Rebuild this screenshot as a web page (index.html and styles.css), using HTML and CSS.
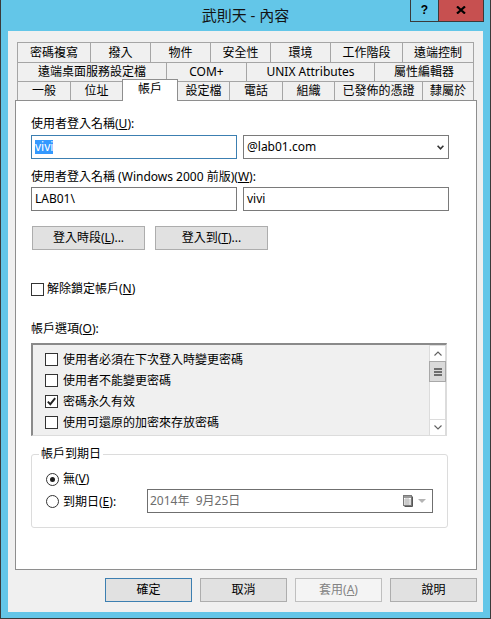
FILE: index.html
```html
<!DOCTYPE html>
<html lang="zh-Hant">
<head>
<meta charset="utf-8">
<title>武則天 - 內容</title>
<link rel="stylesheet" href="styles.css">
</head>
<body>
<div class="window">
  <div class="titlebar">
    <div class="tb-spacer"></div>
    <div class="title">武則天 - 內容</div>
    <div class="caption-btns">
      <div class="cap help">?</div>
      <div class="cap close">
        <svg width="10" height="8" viewBox="0 0 10 8"><path d="M1 0.5 L9 7.5 M9 0.5 L1 7.5" stroke="#000" stroke-width="2.2" fill="none"/></svg>
      </div>
    </div>
  </div>

  <div class="client">
    <div class="tabs">
      <div class="tabrow r1">
        <div class="tab w74">密碼複寫</div>
        <div class="tab w61">撥入</div>
        <div class="tab w61">物件</div>
        <div class="tab w61">安全性</div>
        <div class="tab w61">環境</div>
        <div class="tab w73">工作階段</div>
        <div class="tab w72">遠端控制</div>
      </div>
      <div class="tabrow r2">
        <div class="tab w150">遠端桌面服務設定檔</div>
        <div class="tab w81">COM+</div>
        <div class="tab w129">UNIX Attributes</div>
        <div class="tab w100">屬性編輯器</div>
      </div>
      <div class="tabrow r3">
        <div class="tab w54">一般</div>
        <div class="tab w53">位址</div>
        <div class="tab w56 active">帳戶</div>
        <div class="tab w53">設定檔</div>
        <div class="tab w54">電話</div>
        <div class="tab w53">組織</div>
        <div class="tab w89">已發佈的憑證</div>
        <div class="tab w52">隸屬於</div>
      </div>
    </div>

    <div class="panel">
      <div class="lbl lbl-first">使用者登入名稱(<u>U</u>):</div>
      <div class="field-row fr-first">
        <div class="input focused"><span class="sel">vivi</span></div>
        <div class="input combo">
          <span>@lab01.com</span>
          <svg class="chev" width="7" height="5" viewBox="0 0 7 5"><path d="M0.6 0.8 L3.5 3.8 L6.4 0.8" stroke="#333" stroke-width="1.6" fill="none"/></svg>
        </div>
      </div>
      <div class="lbl lbl-second">使用者登入名稱 (Windows 2000 前版)(<u>W</u>):</div>
      <div class="field-row fr-second">
        <div class="input">LAB01\</div>
        <div class="input">vivi</div>
      </div>
      <div class="btn-row">
        <div class="btn wide">登入時段(<u>L</u>)...</div>
        <div class="btn wide">登入到(<u>T</u>)...</div>
      </div>

      <div class="check-line unlock">
        <span class="cb"></span>
        <span class="cb-text">解除鎖定帳戶(<u>N</u>)</span>
      </div>

      <div class="lbl lbl-options">帳戶選項(<u>O</u>):</div>
      <div class="listbox">
        <div class="list-items">
          <div class="list-item"><span class="cb"></span><span>使用者必須在下次登入時變更密碼</span></div>
          <div class="list-item"><span class="cb"></span><span>使用者不能變更密碼</span></div>
          <div class="list-item"><span class="cb checked"><svg width="11" height="11" viewBox="0 0 11 11"><path d="M1.8 5.6 L4.3 8.2 L9.2 2.2" stroke="#222" stroke-width="1.9" fill="none"/></svg></span><span>密碼永久有效</span></div>
          <div class="list-item"><span class="cb"></span><span>使用可還原的加密來存放密碼</span></div>
        </div>
        <div class="scrollbar">
          <div class="sb-btn sb-up"><svg width="8" height="5" viewBox="0 0 8 5"><path d="M0.5 4.5 L4 1 L7.5 4.5" stroke="#606060" stroke-width="1.1" fill="none"/></svg></div>
          <div class="sb-thumb"><svg width="8" height="8" viewBox="0 0 8 8"><rect x="0" y="0" width="8" height="2" fill="#6e6e6e"/><rect x="0" y="3" width="8" height="2" fill="#6e6e6e"/><rect x="0" y="6" width="8" height="2" fill="#6e6e6e"/></svg></div>
          <div class="sb-track"></div>
          <div class="sb-btn sb-down"><svg width="8" height="5" viewBox="0 0 8 5"><path d="M0.5 0.5 L4 4 L7.5 0.5" stroke="#606060" stroke-width="1.1" fill="none"/></svg></div>
        </div>
      </div>

      <fieldset class="expiry">
        <legend>帳戶到期日</legend>
        <div class="fs-body">
          <div class="radio-line r-first">
            <span class="rb checked"><span class="dot"></span></span>
            <span>無(<u>V</u>)</span>
          </div>
          <div class="radio-line r-second">
            <div class="radio-label">
              <span class="rb"></span>
              <span>到期日(<u>E</u>):</span>
            </div>
            <div class="datepicker">
              <span class="date-text">2014年&nbsp;&nbsp;9月25日</span>
              <svg class="cal" width="10" height="12" viewBox="0 0 10 12">
                <rect x="0.5" y="0.5" width="8" height="10" fill="#fff" stroke="#7a7a7a"/>
                <path d="M9.5 1.5 V11.5 H1.5" stroke="#555" fill="none"/>
                <rect x="1" y="1" width="7" height="2" fill="#9a9a9a"/>
                <path d="M1 5 H8 M1 7 H8 M1 9 H8 M3 3 V10 M5 3 V10" stroke="#b8b8b8" stroke-width="1" fill="none"/>
              </svg>
              <svg class="dd" width="8" height="4" viewBox="0 0 8 4"><path d="M0 0 H8 L4 4 Z" fill="#b4b4b4"/></svg>
            </div>
          </div>
        </div>
      </fieldset>
    </div>

    <div class="dlg-buttons">
      <div class="btn dlg default">確定</div>
      <div class="btn dlg">取消</div>
      <div class="btn dlg disabled">套用(<u>A</u>)</div>
      <div class="btn dlg">說明</div>
    </div>
  </div>
</div>
</body>
</html>
```

FILE: styles.css
```css
* {
  box-sizing: border-box;
}

html,
body {
  margin: 0;
  padding: 0;
}

body {
  width: 491px;
  height: 619px;
  font-family: "Noto Sans", "Noto Sans CJK TC", sans-serif;
  font-size: 12px;
  line-height: 16px;
  color: #000;
  background: #fff;
}

.window {
  width: 491px;
  height: 619px;
  background: #63c6e8;
  border: 1px solid #3a3a3a;
  border-top: none;
  display: flex;
  flex-direction: column;
}

/* Title bar */
.titlebar {
  height: 31px;
  display: grid;
  grid-template-columns: 1fr auto 1fr;
}

.title {
  font-size: 15px;
  line-height: 30px;
  color: #141414;
  white-space: nowrap;
}

.caption-btns {
  justify-self: end;
  display: flex;
  height: 22px;
  margin-right: 6px;
}

.cap {
  height: 22px;
  border: 1px solid #3a3a3a;
  border-top: none;
  display: flex;
  align-items: center;
  justify-content: center;
}

.help {
  width: 28px;
  border-right: none;
  font-family: "Liberation Sans", sans-serif;
  font-weight: bold;
  font-size: 12px;
  padding-bottom: 1px;
}

.close {
  width: 46px;
  background: #c75050;
  padding-bottom: 1px;
}

/* Client area */
.client {
  margin-left: 7px;
  width: 475px;
  height: 581px;
  background: #f0f0f0;
  padding-top: 11px;
  display: flex;
  flex-direction: column;
}

.tabs {
  margin-left: 9px;
  width: 457px;
}

.tabrow {
  display: flex;
}

.tab {
  border: 1px solid #a5a5a5;
  border-bottom: none;
  margin-right: -1px;
  background: #f0f0f0;
  display: flex;
  align-items: center;
  justify-content: center;
  white-space: nowrap;
  flex: none;
}

.r1 .tab {
  height: 20px;
}

.r2 .tab,
.r3 .tab {
  height: 19px;
}

.r3 .tab.active {
  height: 22px;
  margin-top: -2px;
  margin-bottom: -1px;
  background: #fff;
  position: relative;
  z-index: 1;
  padding-bottom: 3px;
  border-color: #8e8e8e;
}

.w52 { width: 52px; }
.w53 { width: 53px; }
.w54 { width: 54px; }
.w56 { width: 56px; }
.w61 { width: 61px; }
.w72 { width: 72px; }
.w73 { width: 73px; }
.w74 { width: 74px; }
.w81 { width: 81px; }
.w89 { width: 89px; }
.w100 { width: 100px; }
.w129 { width: 129px; }
.w150 { width: 150px; }

.panel {
  margin-left: 7px;
  width: 462px;
  height: 470px;
  border: 1px solid #8e8e8e;
  background: #fff;
  padding: 0 15px;
  display: flex;
  flex-direction: column;
}

.lbl {
  height: 16px;
  white-space: nowrap;
}

.lbl-first {
  margin-top: 15px;
}

.lbl-second {
  margin-top: 10px;
}

.lbl-options {
  margin-top: 24px;
}

.field-row {
  display: flex;
  gap: 6px;
}

.fr-first {
  margin-top: 3px;
}

.fr-second {
  margin-top: 2px;
}

.input {
  width: 206px;
  height: 24px;
  border: 1px solid #7a7a7a;
  background: #fff;
  padding: 0 3px;
  display: flex;
  align-items: center;
  white-space: nowrap;
}

.input.focused {
  border-color: #3c7fb1;
}

.sel {
  background: #3399ff;
  color: #fff;
  height: 14px;
  line-height: 14px;
  display: inline-block;
}

.combo {
  justify-content: space-between;
  padding-right: 4px;
}

.btn-row {
  display: flex;
  gap: 10px;
  margin-top: 15px;
  padding-left: 1px;
}

.btn {
  height: 24px;
  border: 1px solid #adadad;
  background: #e1e1e1;
  display: flex;
  align-items: center;
  justify-content: center;
  white-space: nowrap;
}

.btn.wide {
  width: 113px;
}

.check-line {
  display: flex;
  align-items: center;
  height: 16px;
  gap: 3px;
}

.unlock {
  margin-top: 31px;
}

.cb {
  width: 13px;
  height: 13px;
  border: 1px solid #333;
  background: #fff;
  flex: none;
  display: flex;
  align-items: center;
  justify-content: center;
}

/* List box */
.listbox {
  margin-top: 6px;
  width: 416px;
  height: 93px;
  border-top: 2px solid #8a8a8a;
  border-left: 2px solid #8a8a8a;
  border-right: 1px solid #dcdcdc;
  border-bottom: 1px solid #dcdcdc;
  background: #f0f0f0;
  display: flex;
}

.list-items {
  flex: 1;
  padding-top: 4px;
  padding-left: 12px;
}

.list-item {
  height: 21px;
  display: flex;
  align-items: center;
  gap: 5px;
  white-space: nowrap;
}

.scrollbar {
  width: 17px;
  background: #fff;
  border: 1px solid #dcdcdc;
  border-bottom: none;
  display: flex;
  flex-direction: column;
}

.sb-btn {
  height: 16px;
  display: flex;
  align-items: center;
  justify-content: center;
  flex: none;
}

.sb-up {
  border-bottom: 1px solid #dcdcdc;
}

.sb-down {
  border-top: 1px solid #dcdcdc;
}

.sb-thumb {
  height: 21px;
  margin: -1px -1px 0;
  background: #dadada;
  border: 1px solid #a8a8a8;
  display: flex;
  align-items: center;
  justify-content: center;
  flex: none;
}

.sb-track {
  flex: 1;
}

/* Fieldset */
.expiry {
  margin: 10px 0 0;
  width: 417px;
  border: 1px solid #dcdcdc;
  border-radius: 3px;
  padding: 0 0 14px 7px;
  min-width: 0;
}

.expiry legend {
  padding: 0 2px;
  line-height: 16px;
}

.fs-body {
  padding-left: 7px;
}

.radio-line {
  display: flex;
  align-items: center;
  gap: 4px;
  white-space: nowrap;
}

.r-first {
  margin-top: 9px;
  height: 16px;
}

.r-second {
  margin-top: 2px;
  height: 24px;
  gap: 0;
}

.radio-label {
  width: 101px;
  display: flex;
  align-items: center;
  gap: 4px;
  padding-top: 1px;
}

.rb {
  width: 13px;
  height: 13px;
  border: 1px solid #333;
  border-radius: 50%;
  background: #fff;
  flex: none;
  display: flex;
  align-items: center;
  justify-content: center;
}

.rb .dot {
  width: 5px;
  height: 5px;
  border-radius: 50%;
  background: #1e1e1e;
}

.datepicker {
  width: 286px;
  height: 24px;
  border: 1px solid #6f6f6f;
  background: #fff;
  color: #6d6d6d;
  display: flex;
  align-items: center;
  padding: 0 6px 0 2px;
}

.date-text {
  flex: 1;
}

.cal {
  margin-right: 5px;
}

/* Dialog buttons */
.dlg-buttons {
  display: flex;
  justify-content: flex-end;
  gap: 8px;
  margin-top: 8px;
  padding-right: 6px;
}

.btn.dlg {
  width: 87px;
}

.btn.default {
  border-color: #3c7fb1;
}

.btn.disabled {
  background: #f4f4f4;
  border-color: #bfbfbf;
  color: #838383;
}
```
